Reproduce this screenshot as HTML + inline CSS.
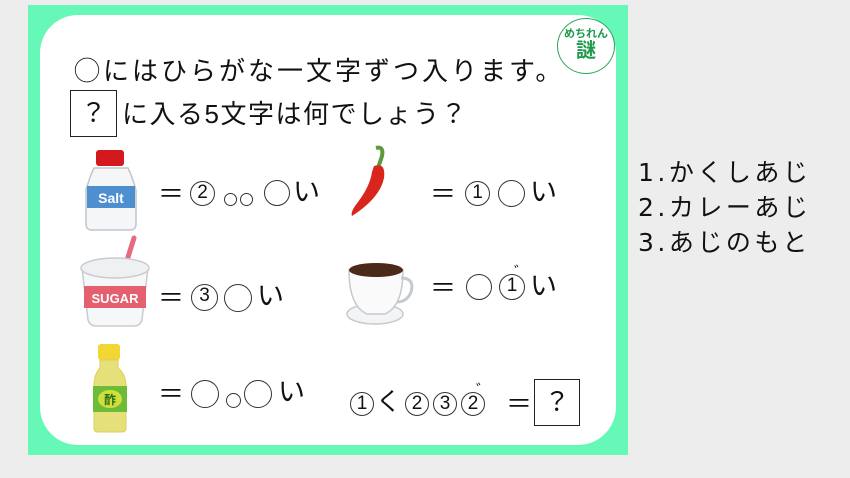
<!DOCTYPE html>
<html><head><meta charset="utf-8"><style>
body{margin:0;width:850px;height:478px;background:#ededed;position:relative;overflow:hidden;font-family:"Liberation Sans","Noto Sans CJK JP",sans-serif;color:#111}
.frame{position:absolute;left:28px;top:5px;width:600px;height:450px;background:#66f8b6}
.inner{position:absolute;left:40px;top:15px;width:576px;height:430px;background:#fff;border-radius:38px}
.a{position:absolute;white-space:nowrap;line-height:1}
.c{position:absolute;border:1.3px solid #333;border-radius:50%;box-sizing:border-box;text-align:center;font-size:19px;line-height:22px;color:#111}
.eq{position:absolute;font-size:26px;line-height:1}
.i{position:absolute;font-size:27px;line-height:1}
.box{position:absolute;border:1.3px solid #222;box-sizing:border-box;text-align:center;font-size:26px}
.list{position:absolute;left:638px;top:155px;font-size:25px;line-height:35px;color:#111;letter-spacing:3.5px;font-family:"DejaVu Sans","Noto Sans CJK JP",sans-serif}
</style></head><body>
<div class="frame"></div><div class="inner"></div>

<div class="a" style="left:74px;top:58px;font-size:26px;letter-spacing:3px">◯にはひらがな一文字ずつ入ります。</div>
<div class="box" style="left:70px;top:90px;width:47px;height:47px;line-height:45px">？</div>
<div class="a" style="left:122px;top:101px;font-size:26px;letter-spacing:1.5px">に入る5文字は何でしょう？</div>

<div style="position:absolute;left:557px;top:18px;width:58px;height:56px;border:1.2px solid #2da45a;border-radius:50%;box-sizing:border-box;background:#fff;text-align:center;color:#1e9a4a;font-weight:bold">
<div style="font-size:11px;margin-top:9px;line-height:12px">めちれん</div><div style="font-size:20px;line-height:22px">謎</div></div>

<!-- salt -->
<svg style="position:absolute;left:82px;top:150px" width="58" height="84">
<rect x="14" y="0" width="28" height="16" rx="3" fill="#d3191e"/>
<path d="M12 18 H46 Q50 26 54 40 V74 Q54 80 48 80 H10 Q4 80 4 74 V40 Q8 26 12 18Z" fill="#f4f6f8" stroke="#bfc6cc" stroke-width="1.5"/>
<rect x="5" y="36" width="48" height="22" fill="#4e8fd0"/>
<text x="29" y="53" font-size="14" font-weight="bold" fill="#fff" text-anchor="middle" font-family="Liberation Sans">Salt</text>
</svg>
<div class="eq" style="left:158px;top:181px">＝</div>
<div class="c" style="left:190px;top:181px;width:25px;height:25px">2</div>
<div class="c" style="left:224px;top:193px;width:13px;height:13px"></div>
<div class="c" style="left:240px;top:193px;width:13px;height:13px"></div>
<div class="c" style="left:264px;top:180px;width:26px;height:26px"></div>
<div class="i" style="left:293px;top:179px">い</div>

<!-- pepper -->
<svg style="position:absolute;left:348px;top:142px" width="50" height="76">
<path d="M28 6 Q36 4 34 14 L30 26" stroke="#5c9b3b" stroke-width="4" fill="none"/>
<path d="M26 24 Q38 20 36 36 Q32 56 4 74 Q2 70 10 60 Q22 44 24 30Z" fill="#d9261c"/>
</svg>
<div class="eq" style="left:430px;top:181px">＝</div>
<div class="c" style="left:465px;top:181px;width:25px;height:25px">1</div>
<div class="c" style="left:498px;top:180px;width:27px;height:27px"></div>
<div class="i" style="left:530px;top:179px">い</div>

<!-- sugar -->
<svg style="position:absolute;left:76px;top:234px" width="80" height="96">
<path d="M58 4 L48 36" stroke="#e86a80" stroke-width="5" stroke-linecap="round"/>
<path d="M6 34 H72 L66 86 Q64 92 58 92 H20 Q14 92 12 86Z" fill="#f6f7f8" stroke="#c8ccd0" stroke-width="1.5"/>
<ellipse cx="39" cy="34" rx="34" ry="10" fill="#eef0f2" stroke="#c8ccd0" stroke-width="1.5"/>
<rect x="8" y="52" width="62" height="22" fill="#e4606e"/>
<text x="39" y="69" font-size="13" font-weight="bold" fill="#fff" text-anchor="middle" font-family="Liberation Sans">SUGAR</text>
</svg>
<div class="eq" style="left:158px;top:285px">＝</div>
<div class="c" style="left:191px;top:284px;width:27px;height:27px">3</div>
<div class="c" style="left:224px;top:284px;width:28px;height:28px"></div>
<div class="i" style="left:257px;top:283px">い</div>

<!-- coffee -->
<svg style="position:absolute;left:345px;top:258px" width="72" height="72">
<ellipse cx="30" cy="56" rx="28" ry="10" fill="#f3f4f5" stroke="#c5cacf" stroke-width="1.5"/>
<path d="M4 12 H58 Q58 48 40 56 H22 Q4 48 4 12Z" fill="#fafafa" stroke="#c5cacf" stroke-width="1.5"/>
<path d="M56 20 Q70 20 66 34 Q62 44 52 44" stroke="#c5cacf" stroke-width="3" fill="none"/>
<ellipse cx="31" cy="12" rx="27" ry="7" fill="#4b2a1a"/>
</svg>
<div class="eq" style="left:430px;top:275px">＝</div>
<div class="c" style="left:466px;top:274px;width:26px;height:26px"></div>
<div class="c" style="left:499px;top:274px;width:26px;height:26px">1</div>
<div class="a" style="left:514px;top:265px;font-size:15px">゛</div>
<div class="i" style="left:530px;top:273px">い</div>

<!-- vinegar -->
<svg style="position:absolute;left:90px;top:342px" width="40" height="92">
<rect x="8" y="2" width="22" height="16" rx="3" fill="#f2d633"/>
<path d="M10 18 H28 V26 Q36 32 36 44 V86 Q36 90 32 90 H8 Q4 90 4 86 V44 Q4 32 10 26Z" fill="#e6e07a" stroke="#d9cf55"/>
<rect x="3" y="44" width="34" height="26" fill="#6cbc3a"/>
<ellipse cx="20" cy="57" rx="12" ry="9" fill="#cfe03a"/>
<text x="20" y="62" font-size="12" font-weight="bold" fill="#2e6a1c" text-anchor="middle">酢</text>
</svg>
<div class="eq" style="left:158px;top:381px">＝</div>
<div class="c" style="left:191px;top:380px;width:28px;height:28px"></div>
<div class="c" style="left:226px;top:393px;width:15px;height:15px"></div>
<div class="c" style="left:244px;top:380px;width:28px;height:28px"></div>
<div class="i" style="left:278px;top:379px">い</div>

<!-- bottom -->
<div class="c" style="left:350px;top:392px;width:24px;height:24px">1</div>
<div class="i" style="left:376px;top:390px;font-size:25px">く</div>
<div class="c" style="left:405px;top:392px;width:24px;height:24px">2</div>
<div class="c" style="left:433px;top:392px;width:24px;height:24px">3</div>
<div class="c" style="left:461px;top:392px;width:24px;height:24px">2</div>
<div class="a" style="left:476px;top:383px;font-size:15px">゛</div>
<div class="eq" style="left:506px;top:391px">＝</div>
<div class="box" style="left:534px;top:379px;width:46px;height:47px;line-height:45px">？</div>

<div class="list">1.かくしあじ<br>2.カレーあじ<br>3.あじのもと</div>
</body></html>
